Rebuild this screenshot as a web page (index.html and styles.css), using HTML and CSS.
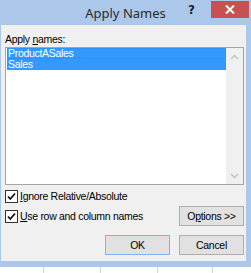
FILE: index.html
```html
<!DOCTYPE html>
<html lang="en">
<head>
<meta charset="UTF-8">
<title>Apply Names</title>
<link rel="stylesheet" href="styles.css">
</head>
<body>

<div class="dialog">
  <div class="titlebar">
    <div class="title">Apply Names</div>
    <div class="help">?</div>
    <div class="close">
      <svg width="10" height="9" viewBox="0 0 10 9"><path d="M1 0.5 L9 8.5 M9 0.5 L1 8.5" stroke="#fff" stroke-width="2"/></svg>
    </div>
  </div>

  <div class="client">
    <div class="label">Apply <u>n</u>ames:</div>

    <div class="listbox">
      <div class="items">
        <div class="item selected focused">ProductASales</div>
        <div class="item selected">Sales</div>
      </div>
      <div class="scrollbar">
        <svg width="9" height="6" viewBox="0 0 9 6"><path d="M1 5 L4.5 1.5 L8 5" fill="none" stroke="#c2c2c2" stroke-width="1.4"/></svg>
        <svg width="9" height="6" viewBox="0 0 9 6"><path d="M1 1 L4.5 4.5 L8 1" fill="none" stroke="#c2c2c2" stroke-width="1.4"/></svg>
      </div>
    </div>

    <div class="check-row first">
      <span class="checkbox"><svg width="11" height="11" viewBox="0 0 11 11"><path d="M2 5.5 L4.3 8 L9 2.5" fill="none" stroke="#111" stroke-width="1.8"/></svg></span>
      <span><u>I</u>gnore Relative/Absolute</span>
    </div>

    <div class="check-row second">
      <span class="checkbox"><svg width="11" height="11" viewBox="0 0 11 11"><path d="M2 5.5 L4.3 8 L9 2.5" fill="none" stroke="#111" stroke-width="1.8"/></svg></span>
      <span class="grow"><u>U</u>se row and column names</span>
      <button class="btn">O<u>p</u>tions &gt;&gt;</button>
    </div>

    <div class="buttons">
      <button class="btn default">OK</button>
      <button class="btn">Cancel</button>
    </div>
  </div>
</div>

<div class="sheet">
  <div class="cell c1"></div>
  <div class="cell c2"></div>
  <div class="cell c3"></div>
  <div class="cell c4"></div>
  <div class="cell c5"></div>
</div>

</body>
</html>
```

FILE: styles.css
```css
* { box-sizing: border-box; margin: 0; padding: 0; }
body { background: #fff; font-family: "Liberation Sans", Arial, sans-serif; font-size: 10.5px; letter-spacing: -0.3px; color: #000; width: 251px; height: 273px; overflow: hidden; }

.dialog { background: #abc8ea; padding: 0 5px 6px 1px; height: 267px; display: flex; flex-direction: column; }

.titlebar { height: 25px; display: flex; align-items: flex-start; }
.title { flex: 1; text-align: center; font-family: "Noto Sans", sans-serif; font-size: 13px; letter-spacing: 0; color: #2b2b2b; line-height: 26px; padding-left: 62px; }
.help { width: 14px; font-family: "DejaVu Sans", sans-serif; font-weight: bold; font-size: 12px; letter-spacing: 0; color: #222; line-height: 18px; margin-right: 9px; margin-top: 1px; }
.close { width: 38px; height: 17px; margin-top: 1px; margin-right: -3px; background: #c75050; display: flex; align-items: center; justify-content: center; }

.client { flex: 1; background: #f0f0f0; padding: 8px 2px 0 4px; display: flex; flex-direction: column; }

.label { line-height: 13px; height: 13px; margin-bottom: 1px; }

.listbox { height: 138px; border: 1px solid #a5a5a5; background: #fff; display: flex; }
.items { flex: 1; }
.item { height: 11px; line-height: 11px; padding-left: 1px; margin-left: 1px; }
.item.selected { background: #3399ff; color: #fff; }
.item.focused { outline: 1px dotted #7a7a7a; outline-offset: -1px; }
.scrollbar { width: 17px; background: #f0f0f0; display: flex; flex-direction: column; justify-content: space-between; align-items: center; padding: 6px 0 5px; }
.scrollbar svg { display: block; }

.check-row { display: flex; align-items: center; }
.check-row.first { margin-top: 4px; height: 14px; }
.check-row.second { margin-top: 3px; height: 20px; }
.checkbox { width: 13px; height: 13px; border: 1px solid #333; background: #fff; margin-right: 2px; display: flex; align-items: center; justify-content: center; }
.checkbox svg { display: block; }
.grow { flex: 1; }

.btn { width: 65px; height: 20px; background: #e1e1e1; border: 1px solid #adadad; font-family: "Liberation Sans", Arial, sans-serif; font-size: 10.5px; letter-spacing: -0.3px; color: #000; }
.btn.default { border-color: #7db3ee; }

.buttons { display: flex; justify-content: flex-end; gap: 9px; margin-top: 9px; }

.sheet { height: 6px; display: flex; background: #fff; }
.cell { border-right: 1px solid #d4d4d4; height: 6px; }
.c1 { width: 44px; }
.c2 { width: 57px; }
.c3 { width: 57px; }
.c4 { width: 55px; }
.c5 { flex: 1; border-right: none; }
```
